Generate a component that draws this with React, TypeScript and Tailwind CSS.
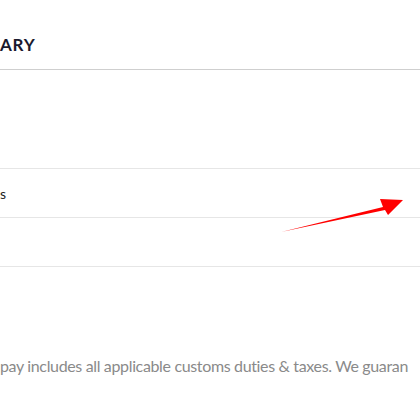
export default function App() {
  const rows = [{ label: "s" }, { label: "" }]

  return (
    <div className="w-[420px] h-[420px] bg-white overflow-hidden" style={{ fontFamily: "Lato, 'Liberation Sans', sans-serif" }}>
      <div className="relative">
        <div className="h-[70px] flex items-end border-b border-[#cfcfcf] pb-[16px]">
          <h2 className="text-[17px] leading-none font-bold tracking-[0.8px] text-[#1a1a2e]">ARY</h2>
        </div>
        <div className="h-[99px] border-b border-[#e6e6e6]"></div>
        {rows.map((row, i) => (
          <div key={i} className="h-[49px] flex items-center border-b border-[#e6e6e6] text-[14px] text-[#222]">
            {row.label}
          </div>
        ))}
        <p className="mt-[87px] whitespace-nowrap text-[16px] text-[#8a8a8a] tracking-[-0.35px]">
          pay includes all applicable customs duties &amp; taxes. We guaran
        </p>

        <svg className="absolute left-[278px] top-[196px]" width="130" height="40" viewBox="0 0 130 40">
          <polygon points="3,36 105,11 102,3 125,4 110,19 107,14" fill="#ff0000" />
        </svg>
      </div>
    </div>
  )
}
